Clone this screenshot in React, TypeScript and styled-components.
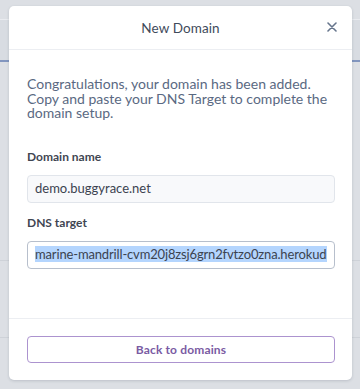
import React from "react";
import styled, { createGlobalStyle } from "styled-components";

const Global = createGlobalStyle`
  html, body { margin: 0; padding: 0; }
  body {
    width: 360px;
    height: 389px;
    overflow: hidden;
    background: #dcdfe4;
    font-family: Lato, "Open Sans", Arial, sans-serif;
  }
  * { box-sizing: border-box; }
`;

const Page = styled.div`
  position: relative;
  width: 360px;
  height: 389px;
  overflow: hidden;
  display: flex;
  flex-direction: column;
`;

const BgRow = styled.div<{ $h: number; $line: string; $lw?: number; $bg?: string }>`
  height: ${(p) => p.$h}px;
  flex: none;
  background: ${(p) => p.$bg || "transparent"};
  border-bottom: ${(p) => p.$lw || 1}px solid ${(p) => p.$line};
`;

const Modal = styled.div`
  position: absolute;
  left: 9px;
  top: 6px;
  width: 343px;
  height: 374px;
  background: #fff;
  border-radius: 5px;
  box-shadow: 0 1px 3px rgba(40, 50, 70, 0.18);
  display: flex;
  flex-direction: column;
  overflow: hidden;
`;

const Header = styled.div`
  height: 44px;
  flex: none;
  display: flex;
  align-items: center;
  justify-content: center;
  position: relative;
  border-bottom: 1px solid #eceef2;
`;

const Title = styled.div`
  font-size: 13.5px;
  color: #3f4b5b;
  letter-spacing: 0.1px;
  margin-top: 1px;
`;

const Close = styled.button`
  position: absolute;
  right: 14px;
  top: 15px;
  width: 12px;
  height: 12px;
  padding: 0;
  border: none;
  background: transparent;
  display: flex;
  align-items: center;
  justify-content: center;
`;

const Body = styled.div`
  flex: 1;
  padding: 27px 17px 0 18px;
  display: flex;
  flex-direction: column;
  border-bottom: 1px solid #eceef2;
`;

const Intro = styled.p`
  margin: 0 0 28px 0;
  font-size: 14px;
  line-height: 14.5px;
  color: #5a6982;
`;

const Label = styled.div<{ $mt?: number }>`
  font-size: 12px;
  font-weight: 700;
  line-height: 16px;
  color: #3f4652;
  margin: ${(p) => p.$mt || 0}px 0 10px 0;
`;

const Field = styled.div<{ $focus?: boolean }>`
  height: 28px;
  width: 308px;
  padding: 0 7px;
  border-radius: 4px;
  border: 1px solid ${(p) => (p.$focus ? "#b7bfcc" : "#e1e5eb")};
  background: ${(p) => (p.$focus ? "#fff" : "#f8f9fb")};
  display: flex;
  align-items: center;
`;

const FieldText = styled.div<{ $tight?: boolean }>`
  width: 100%;
  overflow: hidden;
  white-space: nowrap;
  font-size: 13px;
  line-height: 17px;
  letter-spacing: ${(p) => (p.$tight ? "-0.15px" : "0")};
  color: #3b4350;
`;

const Selected = styled.span`
  background: #b4d5fe;
`;

const Footer = styled.div`
  height: 61px;
  flex: none;
  padding: 17px 17px 0 18px;
`;

const Button = styled.button`
  width: 308px;
  height: 27px;
  border-radius: 4px;
  border: 1px solid #ac93cf;
  background: #fff;
  color: #7a5ba3;
  font-family: Lato, "Open Sans", Arial, sans-serif;
  font-size: 12px;
  font-weight: 700;
  letter-spacing: 0.15px;
  display: flex;
  align-items: center;
  justify-content: center;
  padding: 0;
  padding-bottom: 1px;
`;

export default function App() {
  return (
    <>
      <Global />
      <Page>
        <BgRow $h={20} $line="#e9ebef" />
        <BgRow $h={42} $line="#8296bf" $lw={2} $bg="#d8dce2" />
        <BgRow $h={199} $line="#ced2d8" />
        <BgRow $h={77} $line="#ced2d8" />
        <Modal>
          <Header>
            <Title>New Domain</Title>
            <Close aria-label="Close">
              <svg width="10" height="10" viewBox="0 0 10 10">
                <path
                  d="M1 1 L9 9 M9 1 L1 9"
                  stroke="#66758c"
                  strokeWidth="1.6"
                  strokeLinecap="round"
                />
              </svg>
            </Close>
          </Header>
          <Body>
            <Intro>
              Congratulations, your domain has been added. Copy and paste your
              DNS Target to complete the domain setup.
            </Intro>
            <Label>Domain name</Label>
            <Field>
              <FieldText>demo.buggyrace.net</FieldText>
            </Field>
            <Label $mt={12}>DNS target</Label>
            <Field $focus>
              <FieldText $tight>
                <Selected>
                  marine-mandrill-cvm20j8zsj6grn2fvtzo0zna.herokudns.com
                </Selected>
              </FieldText>
            </Field>
          </Body>
          <Footer>
            <Button>Back to domains</Button>
          </Footer>
        </Modal>
      </Page>
    </>
  );
}
